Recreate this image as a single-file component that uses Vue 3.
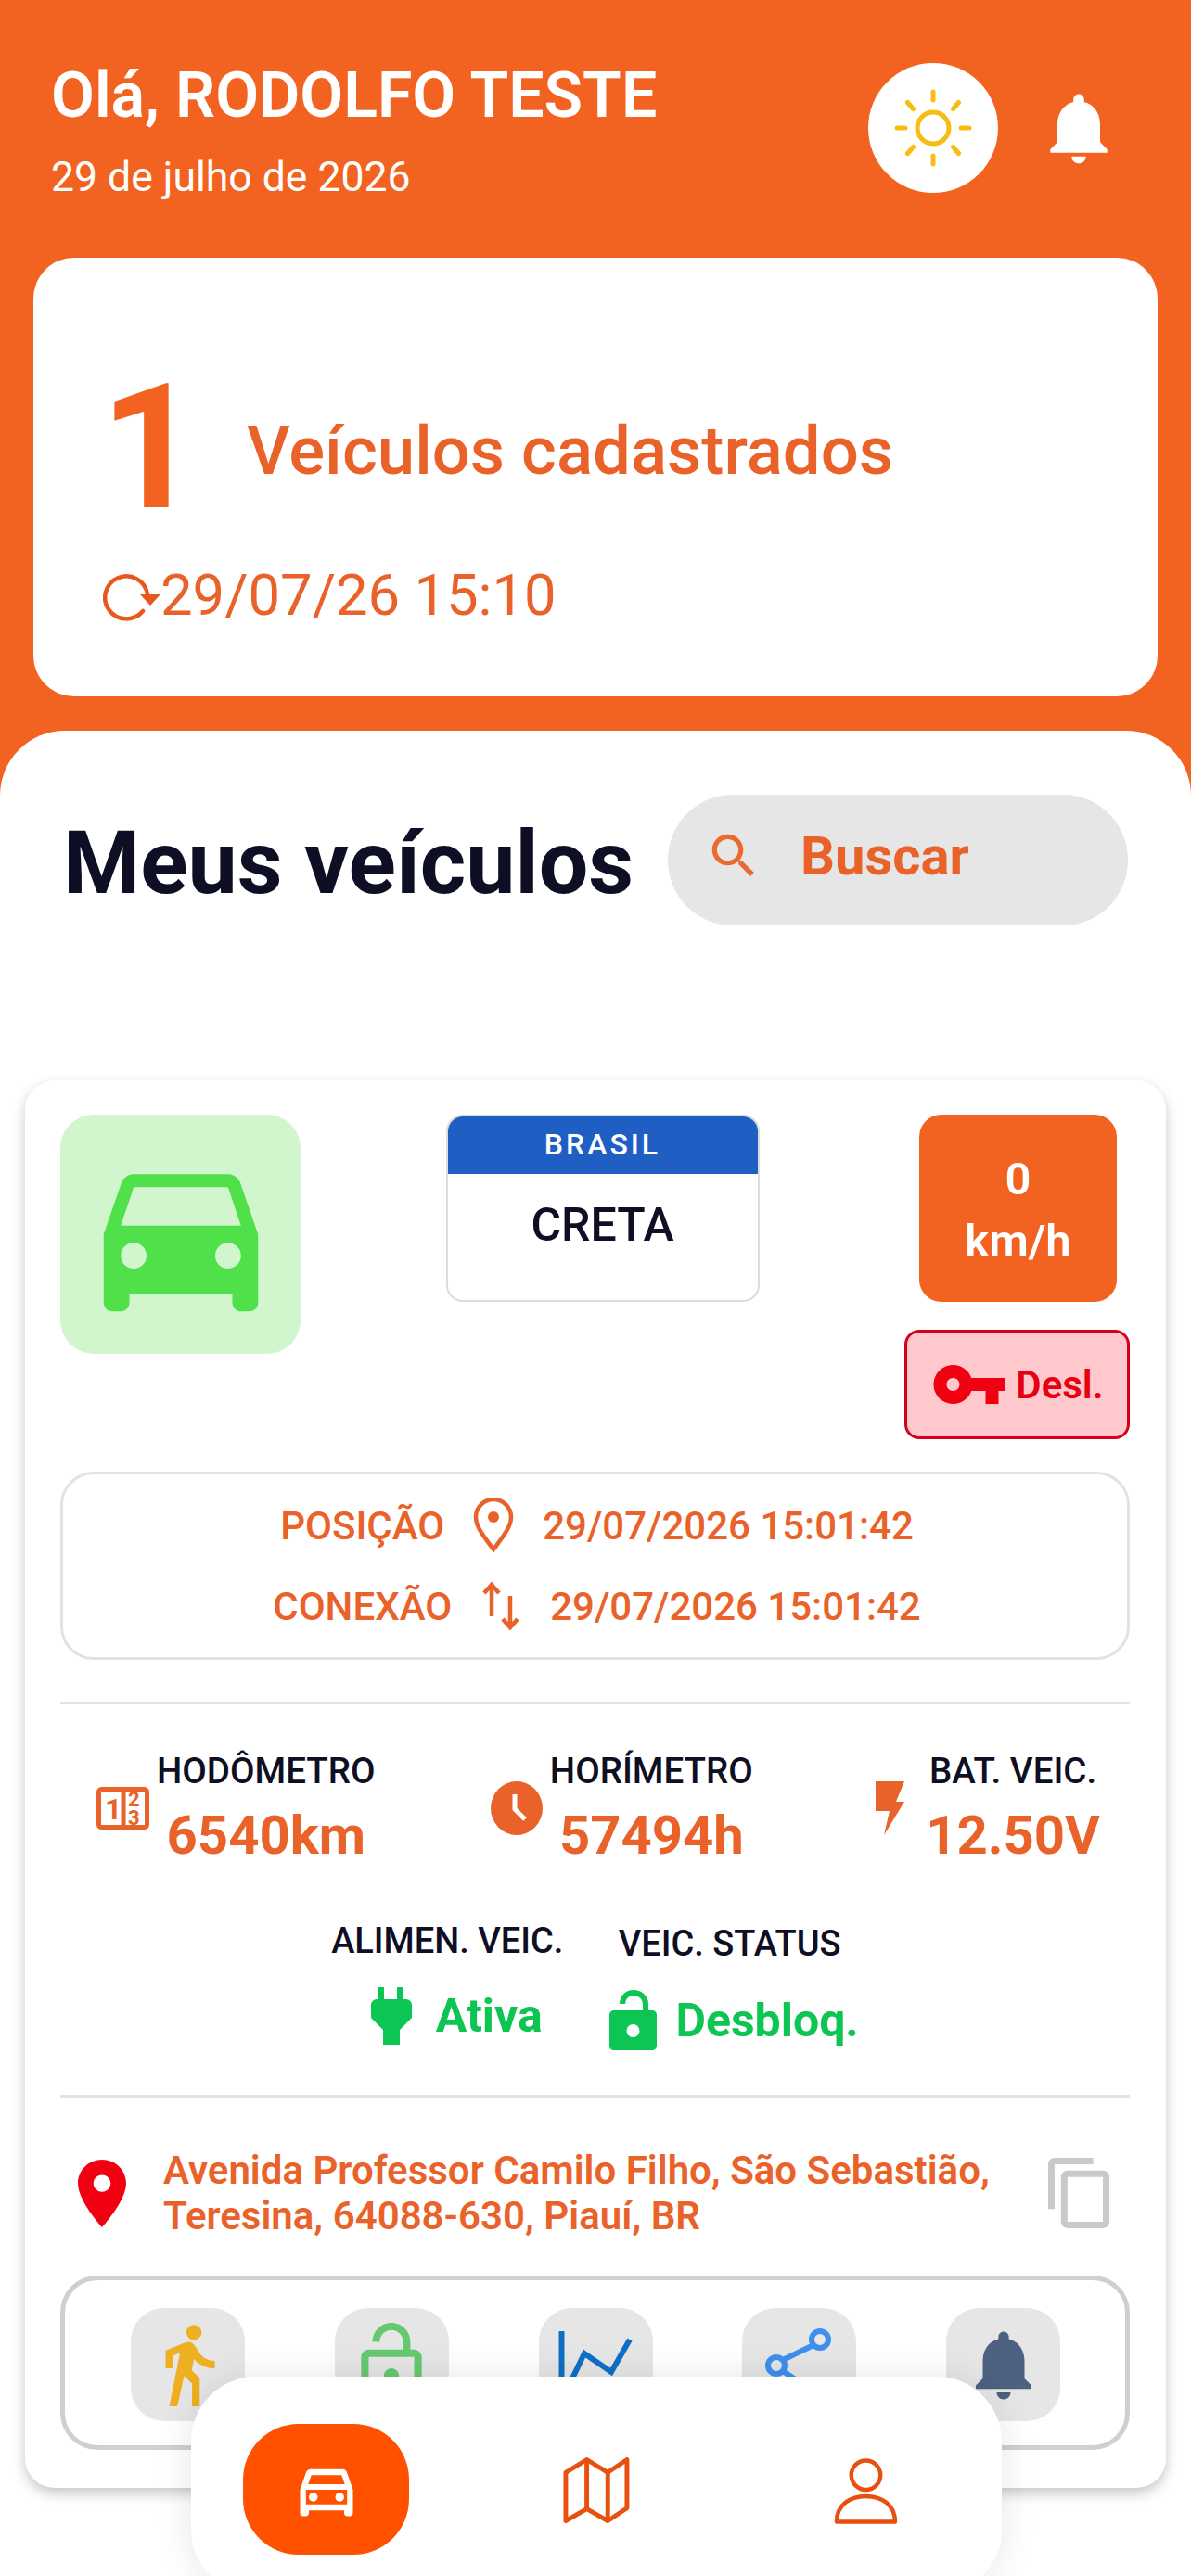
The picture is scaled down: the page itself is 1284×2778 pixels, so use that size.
<template>
  <div class="page">
    <header class="top">
      <div class="hello">
        <h1>Olá, RODOLFO TESTE</h1>
        <p>29 de julho de 2026</p>
      </div>
      <div class="sun-btn">
        <svg width="84" height="84" viewBox="0 0 84 84" fill="none" stroke="#f7bd14" stroke-width="5" stroke-linecap="round">
          <circle cx="42" cy="42" r="17" />
          <path d="M42 3v9M42 72v9M3 42h9M72 42h9M14.500 14.500l6 7M63.500 62.500l6 7M14.500 69.500l6-7M63.500 21.500l6-7" />
        </svg>
      </div>
      <svg class="bell" width="92" height="92" viewBox="0 0 24 24" fill="#fff"><path :d="bellPath" /></svg>
    </header>

    <section class="summary">
      <div class="count-row">
        <span class="count">1</span>
        <span class="count-label">Veículos cadastrados</span>
      </div>
      <div class="updated">
        <svg width="62" height="56" viewBox="0 0 62 56" fill="none" stroke="#e8581c" stroke-width="4.500" stroke-linecap="round">
          <path d="M43 45A23 23 0 1 1 48 27" />
          <path d="M40 27h22L51 39z" fill="#e8581c" stroke="none" />
        </svg>
        <span>29/07/26 15:10</span>
      </div>
    </section>

    <main class="sheet">
      <div class="sheet-head">
        <h2>Meus veículos</h2>
        <div class="search">
          <svg width="62" height="62" viewBox="0 0 24 24" fill="#ea6a32"><path d="M15.500 14h-.79l-.28-.27C15.410 12.590 16 11.110 16 9.500 16 5.910 13.090 3 9.500 3S3 5.910 3 9.500 5.910 16 9.500 16c1.610 0 3.090-.59 4.230-1.570l.27.28v.79l5 4.990L20.490 19l-4.990-5zm-6 0C7.010 14 5 11.990 5 9.500S7.010 5 9.500 5 14 7.010 14 9.500 11.990 14 9.500 14z" /></svg>
          <span>Buscar</span>
        </div>
      </div>

      <article class="vehicle">
        <div class="vehicle-top">
          <div class="car-tile">
            <svg width="222" height="222" viewBox="0 0 24 24" fill="#4fe04a"><path d="M18.920 6.010C18.720 5.420 18.160 5 17.500 5h-11c-.66 0-1.210.42-1.420 1.010L3 12v8c0 .55.45 1 1 1h1c.55 0 1-.45 1-1v-1h12v1c0 .55.45 1 1 1h1c.55 0 1-.45 1-1v-8l-2.080-5.990zM6.500 16c-.83 0-1.500-.67-1.500-1.500S5.670 13 6.500 13s1.500.67 1.500 1.500S7.330 16 6.500 16zm11 0c-.83 0-1.500-.67-1.500-1.500s.67-1.500 1.500-1.500 1.500.67 1.500 1.500-.67 1.500-1.500 1.500zM5 11l1.500-4.500h11L19 11H5z" /></svg>
          </div>
          <div class="plate">
            <div class="plate-head">BRASIL</div>
            <div class="plate-name">CRETA</div>
          </div>
          <div class="status-col">
            <div class="speed"><span>0</span><span>km/h</span></div>
            <div class="ignition">
              <svg width="84" height="84" viewBox="0 0 24 24" fill="#f00010"><path d="M12.650 10C11.830 7.670 9.610 6 7 6c-3.310 0-6 2.690-6 6s2.690 6 6 6c2.610 0 4.830-1.670 5.650-4H17v4h4v-4h2v-4H12.650zM7 14c-1.100 0-2-.9-2-2s.9-2 2-2 2 .9 2 2-.9 2-2 2z" /></svg>
              <span>Desl.</span>
            </div>
          </div>
        </div>

        <div class="times">
          <div class="time-row">
            <span>POSIÇÃO</span>
            <svg width="44" height="60" viewBox="0 0 44 60" fill="none" stroke="#e9622a" stroke-width="4.500"><path d="M22 56C12 42 3 32 3 21a19 19 0 0 1 38 0c0 11-9 21-19 35z" /><circle cx="22" cy="21" r="6" fill="#e9622a" stroke="none" /></svg>
            <span>29/07/2026 15:01:42</span>
          </div>
          <div class="time-row">
            <span>CONEXÃO</span>
            <svg width="44" height="54" viewBox="0 0 44 54" fill="none" stroke="#e9622a" stroke-width="4.500"><path d="M12 38V4M4 13l8-9 8 9M32 16v34M24 41l8 9 8-9" /></svg>
            <span>29/07/2026 15:01:42</span>
          </div>
        </div>

        <div class="metrics">
          <div class="metric">
            <svg width="57" height="46" viewBox="0 0 57 46" fill="none" stroke="#e9622a" stroke-width="5">
              <rect x="2.500" y="2.500" width="52" height="41" rx="3" />
              <path d="M29 3v40" />
              <text x="9" y="35" class="odo-digit">1</text>
              <text x="34" y="21" class="odo-small">2</text>
              <text x="34" y="41" class="odo-small">3</text>
            </svg>
            <div class="metric-text">
              <span class="metric-label">HODÔMETRO</span>
              <span class="metric-value">6540km</span>
            </div>
          </div>
          <div class="metric middle">
            <svg width="56" height="58" viewBox="0 0 56 58" fill="none"><ellipse cx="28" cy="29" rx="28" ry="29" fill="#e9622a" /><path d="M26 14v16l11 11" stroke="#fff" stroke-width="5" /></svg>
            <div class="metric-text">
              <span class="metric-label">HORÍMETRO</span>
              <span class="metric-value">57494h</span>
            </div>
          </div>
          <div class="metric">
            <svg class="flash" width="34" height="58" viewBox="0 0 34 58" fill="#e9622a"><path d="M2 0h31l-9 22h9L11 58l6-26H2z" /></svg>
            <div class="metric-text">
              <span class="metric-label">BAT. VEIC.</span>
              <span class="metric-value">12.50V</span>
            </div>
          </div>
        </div>

        <div class="states">
          <div class="state">
            <span class="state-label">ALIMEN. VEIC.</span>
            <div class="state-value">
              <svg width="44" height="62" viewBox="0 0 44 62" fill="#0dc552"><path d="M8 0h6v13h14V0h7v13h3c3 0 6 3 6 6v14L31 46v16H13V46L0 33V19c0-3 3-6 6-6h2z" /></svg>
              <span>Ativa</span>
            </div>
          </div>
          <div class="state second">
            <span class="state-label">VEIC. STATUS</span>
            <div class="state-value">
              <svg width="51" height="65" viewBox="0 0 51 65" fill="none">
                <path d="M14 15c0-7 5-12 12-12s13 5 13 12v10" stroke="#0dc552" stroke-width="6" />
                <path fill="#0dc552" fill-rule="evenodd" d="M5 22h41c3 0 5 2 5 5v33c0 3-2 5-5 5H5c-3 0-5-2-5-5V27c0-3 2-5 5-5zm20.500 29a7 7 0 1 0 0-14 7 7 0 0 0 0 14z" />
              </svg>
              <span>Desbloq.</span>
            </div>
          </div>
        </div>

        <div class="address">
          <svg class="pin" width="52" height="73" viewBox="5 2 14 20" fill="#f00010" preserveAspectRatio="none"><path d="M12 2C8.130 2 5 5.130 5 9c0 5.250 7 13 7 13s7-7.750 7-13c0-3.870-3.130-7-7-7zm0 9.500c-1.380 0-2.500-1.120-2.500-2.500s1.120-2.500 2.500-2.500 2.500 1.120 2.500 2.500-1.120 2.500-2.500 2.500z" /></svg>
          <p>Avenida Professor Camilo Filho, São Sebastião, Teresina, 64088-630, Piauí, BR</p>
          <svg class="copy" width="66" height="76" viewBox="2 1 19 22" fill="#c9c9c9" preserveAspectRatio="none"><path d="M16 1H4c-1.100 0-2 .9-2 2v14h2V3h12V1zm3 4H8c-1.100 0-2 .9-2 2v14c0 1.100.9 2 2 2h11c1.100 0 2-.9 2-2V7c0-1.100-.9-2-2-2zm0 16H8V7h11v14z" /></svg>
        </div>

        <div class="actions">
          <div class="action">
            <svg width="98" height="98" viewBox="0 0 24 24" fill="#eeb021"><path d="M13.500 5.500c1.100 0 2-.9 2-2s-.9-2-2-2-2 .9-2 2 .9 2 2 2zM9.800 8.900L7 23h2.100l1.800-8 2.100 2v6h2v-7.500l-2.100-2 .6-3C14.800 12 16.800 13 19 13v-2c-1.900 0-3.500-1-4.300-2.400l-1-1.600c-.4-.6-1-1-1.700-1-.3 0-.5.1-.8.1L6 8.300V13h2V9.600l1.800-.7" /></svg>
          </div>
          <div class="action">
            <svg width="98" height="98" viewBox="0 0 24 24" fill="#67c96f"><path fill-rule="evenodd" d="M12 17c1.100 0 2-.9 2-2s-.9-2-2-2-2 .9-2 2 .9 2 2 2zm6-9h-1V6c0-2.760-2.240-5-5-5S7 3.240 7 6h1.900c0-1.710 1.390-3.100 3.100-3.100 1.710 0 3.100 1.390 3.100 3.100v2H6c-1.100 0-2 .9-2 2v10c0 1.100.9 2 2 2h12c1.100 0 2-.9 2-2V10c0-1.100-.9-2-2-2zm0 12H6V10h12v10z" /></svg>
          </div>
          <div class="action">
            <svg width="98" height="98" viewBox="0 0 98 98" fill="none" stroke="#0f6fc6" stroke-width="6"><path d="M12.500 13v85M22 68l15-31 29 20 20-35" /></svg>
          </div>
          <div class="action">
            <svg width="98" height="98" viewBox="0 0 98 98" fill="none" stroke="#3f8ef0" stroke-width="6"><circle cx="71" cy="22" r="9" /><circle cx="24" cy="50" r="9" /><circle cx="71" cy="84" r="9" /><path d="M64 28L31 44M31 56l33 22" /></svg>
          </div>
          <div class="action">
            <svg width="90" height="90" viewBox="0 0 24 24" fill="#4d6180"><path :d="bellPath" /></svg>
          </div>
        </div>
      </article>
    </main>

    <nav class="bottom-nav">
      <div class="nav-active">
        <svg width="76" height="76" viewBox="0 0 24 24" fill="#fff">
          <path d="M18.920 6.010C18.720 5.420 18.160 5 17.500 5h-11c-.66 0-1.210.42-1.420 1.010L3 12v8c0 .55.45 1 1 1h1c.55 0 1-.45 1-1v-1h12v1c0 .55.45 1 1 1h1c.55 0 1-.45 1-1v-8l-2.080-5.990zM6.850 7h10.290l1.080 3.110H5.770L6.850 7zM19 17H5v-5h14v5z" />
          <circle cx="7.500" cy="14.500" r="1.500" />
          <circle cx="16.500" cy="14.500" r="1.500" />
        </svg>
      </div>
      <svg width="76" height="72" viewBox="0 0 76 72" fill="none" stroke="#e8500f" stroke-width="5" stroke-linejoin="round">
        <path d="M4 16L27 2l23 14L71 2v53L50 69 27 56 4 69z" />
        <path d="M27 2v54M50 16v53" />
      </svg>
      <svg width="70" height="74" viewBox="0 0 70 74" fill="none" stroke="#e8500f" stroke-width="4.500" stroke-linejoin="round">
        <circle cx="35" cy="19" r="16" />
        <path d="M3 70c0-18 14-28 32-28s32 10 32 28z" />
      </svg>
    </nav>
  </div>
</template>

<script setup>
const bellPath = 'M12 22c1.100 0 2-.9 2-2h-4c0 1.100.89 2 2 2zm6-6v-5c0-3.070-1.640-5.640-4.500-6.320V4c0-.83-.67-1.500-1.500-1.500s-1.500.67-1.500 1.500v.68C7.630 5.360 6 7.920 6 11v5l-2 2v1h16v-1l-2-2z'
</script>

<style>
html, body {
  margin: 0;
  background: #fff;
}
</style>

<style scoped>
.page {
  position: relative;
  width: 1284px;
  height: 2778px;
  overflow: hidden;
  background: #f26322;
  font-family: Roboto, "Liberation Sans", sans-serif;
  color: #e9622a;
}

h1, h2, p {
  margin: 0;
}

.top {
  display: flex;
  align-items: flex-start;
  height: 278px;
  box-sizing: border-box;
  padding: 68px 0 0 55px;
  color: #fff;
}

.hello {
  flex: 1;
}

.hello h1 {
  font-size: 68px;
  line-height: 70px;
  font-weight: 600;
}

.hello p {
  margin-top: 29px;
  font-size: 44.500px;
  line-height: 48px;
}

.sun-btn {
  display: flex;
  align-items: center;
  justify-content: center;
  width: 140px;
  height: 140px;
  border-radius: 50%;
  background: #fff;
}

.bell {
  margin: 24px 75px 0 41px;
}

.summary {
  height: 473px;
  margin: 0 36px;
  box-sizing: border-box;
  padding: 120px 0 0 72px;
  border-radius: 44px;
  background: #fff;
}

.count-row {
  display: flex;
  align-items: center;
  height: 170px;
}

.count {
  width: 158px;
  font-size: 188px;
  line-height: 170px;
  font-weight: 700;
  color: #f26322;
}

.count-label {
  margin-top: 6px;
  font-size: 72.500px;
  font-weight: 500;
}

.updated {
  display: flex;
  align-items: center;
  margin-top: 38px;
  padding-left: 3px;
  font-size: 61.500px;
}

.sheet {
  height: 1990px;
  margin-top: 37px;
  padding-top: 69px;
  border-radius: 70px 70px 0 0;
  background: #fff;
}

.sheet-head {
  display: flex;
  align-items: center;
  justify-content: space-between;
  margin: 0 68px;
}

.sheet-head h2 {
  padding-top: 6px;
  font-size: 95px;
  font-weight: 700;
  color: #0e0f24;
}

.search {
  display: flex;
  align-items: center;
  gap: 41px;
  width: 496px;
  height: 141px;
  box-sizing: border-box;
  padding: 0 0 10px 40px;
  border-radius: 70px;
  background: #e6e6e6;
  font-size: 58px;
  font-weight: 700;
}

.vehicle {
  height: 1518px;
  margin: 167px 27px 0;
  box-sizing: border-box;
  padding: 37px 39px 0 38px;
  border-radius: 32px;
  background: #fff;
  box-shadow: 0 6px 14px rgba(0, 0, 0, 0.22);
}

.vehicle-top {
  display: flex;
  justify-content: space-between;
  align-items: flex-start;
}

.car-tile {
  display: flex;
  align-items: center;
  justify-content: center;
  width: 259px;
  height: 258px;
  border-radius: 36px;
  background: #d1f6ce;
}

.plate {
  width: 338px;
  height: 202px;
  box-sizing: border-box;
  border: 2px solid #dcdcdc;
  border-radius: 18px;
  overflow: hidden;
  text-align: center;
}

.plate-head {
  height: 62px;
  background: #1f5fc3;
  color: #fff;
  font-size: 32px;
  line-height: 60px;
  font-weight: 500;
  letter-spacing: 3px;
}

.plate-name {
  margin-top: 28px;
  font-size: 50px;
  line-height: 54px;
  font-weight: 500;
  color: #0e0f24;
}

.status-col {
  display: flex;
  flex-direction: column;
  align-items: center;
  width: 243px;
}

.speed {
  display: flex;
  flex-direction: column;
  align-items: center;
  justify-content: center;
  gap: 10px;
  width: 213px;
  height: 202px;
  margin-left: 2px;
  box-sizing: border-box;
  padding-top: 4px;
  border-radius: 24px;
  background: #f26322;
  color: #fff;
  font-size: 49px;
  font-weight: 600;
}

.ignition {
  display: flex;
  align-items: center;
  justify-content: center;
  gap: 8px;
  width: 243px;
  height: 118px;
  margin-top: 30px;
  box-sizing: border-box;
  border: 3px solid #d5001c;
  border-radius: 16px;
  background: #ffc8cc;
  color: #e8000f;
  font-size: 42px;
  font-weight: 600;
}

.times {
  display: flex;
  flex-direction: column;
  justify-content: center;
  gap: 27px;
  height: 203px;
  margin-top: 35px;
  box-sizing: border-box;
  padding-left: 4px;
  border: 3px solid #e2e2e2;
  border-radius: 36px;
}

.time-row {
  display: flex;
  align-items: center;
  justify-content: center;
  gap: 31px;
  height: 60px;
  font-size: 42px;
  font-weight: 500;
}

.metrics {
  display: flex;
  align-items: center;
  justify-content: space-between;
  margin-top: 45px;
  padding: 50px 32px 0 39px;
  border-top: 3px solid #e2e2e2;
}

.metric {
  display: flex;
  align-items: center;
  gap: 8px;
}

.metric.middle {
  margin-left: -6px;
}

.metric-text {
  display: flex;
  flex-direction: column;
  align-items: center;
}

.metric-label {
  font-size: 38.500px;
  line-height: 44px;
  font-weight: 500;
  color: #0e0f24;
}

.metric-value {
  margin-top: 14px;
  font-size: 58px;
  line-height: 66px;
  font-weight: 700;
}

.flash {
  margin-right: 14px;
}

.odo-digit {
  font-size: 32px;
  font-weight: 700;
  fill: #e9622a;
  stroke: none;
}

.odo-small {
  font-size: 22px;
  font-weight: 700;
  fill: #e9622a;
  stroke: none;
}

.states {
  display: flex;
  justify-content: center;
  gap: 40px;
  margin-top: 59px;
  padding-bottom: 48px;
  border-bottom: 3px solid #e2e2e2;
}

.state {
  display: flex;
  flex-direction: column;
  align-items: center;
}

.state.second {
  padding-top: 3px;
}

.state-label {
  font-size: 38px;
  line-height: 44px;
  font-weight: 500;
  color: #0e0f24;
}

.state-value {
  display: flex;
  align-items: center;
  gap: 26px;
  margin: 28px 0 0 20px;
  font-size: 50px;
  font-weight: 700;
  color: #0dc552;
}

.second .state-value {
  gap: 20px;
  margin-left: 10px;
}

.address {
  display: flex;
  align-items: center;
  margin-top: 54px;
  padding-left: 19px;
}

.address p {
  width: 954px;
  margin-left: 40px;
  font-size: 42px;
  line-height: 49px;
  font-weight: 600;
}

.actions {
  display: flex;
  justify-content: space-between;
  height: 188px;
  margin-top: 40px;
  box-sizing: border-box;
  padding: 30px 70px 0 71px;
  border: 5px solid #cfcfcf;
  border-radius: 40px;
}

.action {
  display: flex;
  align-items: center;
  justify-content: center;
  width: 123px;
  height: 122px;
  border-radius: 36px;
  background: #e6e6e6;
}

.bottom-nav {
  position: absolute;
  left: 206px;
  bottom: -20px;
  display: flex;
  align-items: flex-start;
  box-sizing: border-box;
  width: 874px;
  height: 235px;
  padding: 51px 112px 0 56px;
  border-radius: 70px;
  background: #fff;
  box-shadow: 0 0 40px rgba(0, 0, 0, 0.1);
}

.nav-active {
  display: flex;
  align-items: center;
  justify-content: center;
  width: 182px;
  height: 141px;
  margin-right: 165px;
  border-radius: 60px;
  background: #ff5100;
}

.bottom-nav > svg {
  margin-top: 36px;
}

.bottom-nav > svg:last-child {
  margin-left: 218px;
}
</style>
